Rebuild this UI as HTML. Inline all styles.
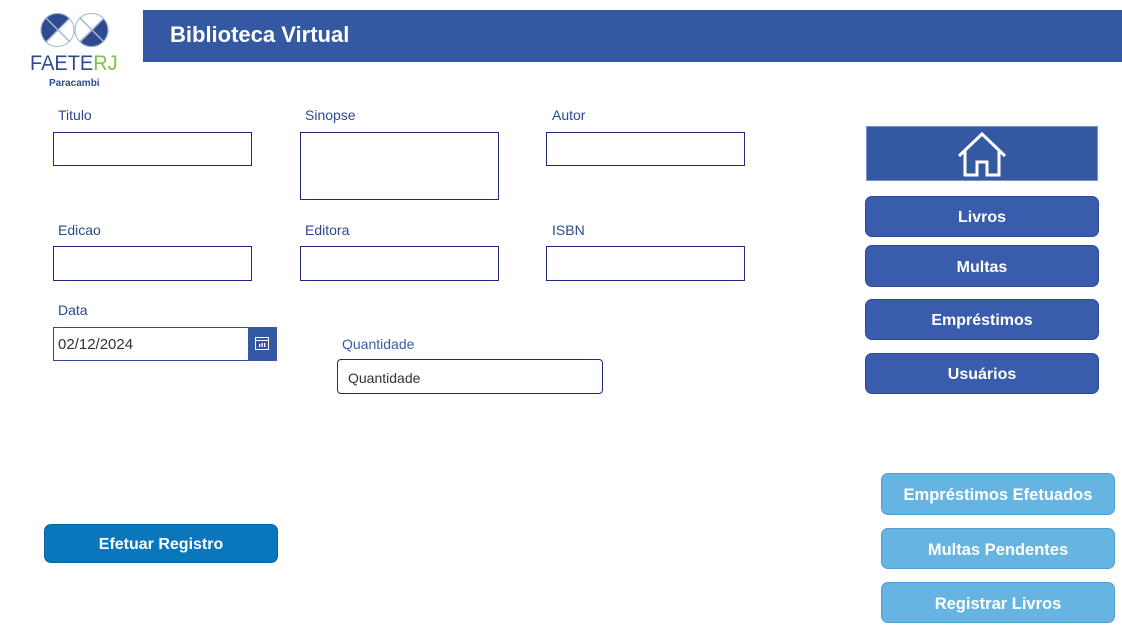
<!DOCTYPE html>
<html><head><meta charset="utf-8"><style>
*{margin:0;padding:0;box-sizing:border-box}
body{width:1122px;height:629px;background:#fff;position:relative;overflow:hidden;font-family:"Liberation Sans",sans-serif}
.a{position:absolute}
.lbl{position:absolute;font-size:14px;color:#2c4a8c}
.inp{position:absolute;border:1px solid #1e2a7e;background:#fff}
.btn{position:absolute;border-radius:7px;color:#fff;font-weight:bold;font-size:16px;display:flex;align-items:center;justify-content:center;padding-top:3px}
.dk{background:#3a5cad;border:1px solid #2e4a94}
.lt{background:#66b4e2;border:1px solid #4e9fd4;font-size:16.5px}
</style></head><body>
<svg class="a" style="left:40px;top:10px" width="70" height="40" viewBox="0 0 70 40">
<defs>
<clipPath id="c1"><circle cx="17.5" cy="20" r="17"/></clipPath>
<clipPath id="c2"><circle cx="51.5" cy="20" r="17"/></clipPath>
</defs>
<g clip-path="url(#c1)">
<rect x="0" y="0" width="35" height="40" fill="#2e4b8e"/>
<polygon points="17.5,20 40,0 40,40" fill="#fff"/>
<polygon points="17.5,20 40,40 0,40" fill="#fff"/>
<line x1="0" y1="2" x2="38" y2="40" stroke="#a8b6d6" stroke-width="1.5"/>
<line x1="0" y1="38" x2="38" y2="0" stroke="#a8b6d6" stroke-width="1.5"/>
</g>
<g clip-path="url(#c2)">
<rect x="34" y="0" width="36" height="40" fill="#2e4b8e"/>
<polygon points="51.5,20 30,0 30,40" fill="#fff"/>
<polygon points="51.5,20 30,0 72,0" fill="#fff"/>
<line x1="32" y1="0" x2="70" y2="38" stroke="#a8b6d6" stroke-width="1.5"/>
<line x1="32" y1="40" x2="70" y2="2" stroke="#a8b6d6" stroke-width="1.5"/>
</g>
<circle cx="17.5" cy="20" r="16.5" fill="none" stroke="#a8b6d6" stroke-width="1"/>
<circle cx="51.5" cy="20" r="16.5" fill="none" stroke="#a8b6d6" stroke-width="1"/>
</svg>
<div class="a" style="left:30px;top:52px;font-size:21px;color:#2e4b8e;transform:scaleX(0.95);transform-origin:left">FAETE<span style="color:#7dc242">RJ</span></div>
<div class="a" style="left:49px;top:78px;font-size:10px;color:#2e4b8e;font-weight:bold">Paracambi</div>
<div class="a" style="left:143px;top:10px;width:979px;height:52px;background:#3558a3"></div>
<div class="a" style="left:170px;top:22px;font-size:22px;color:#fff;font-weight:bold">Biblioteca Virtual</div>

<div class="lbl" style="left:58px;top:107px">Titulo</div>
<div class="inp" style="left:53px;top:132px;width:199px;height:34px"></div>
<div class="lbl" style="left:305px;top:107px">Sinopse</div>
<div class="inp" style="left:300px;top:132px;width:199px;height:68px"></div>
<div class="lbl" style="left:552px;top:107px">Autor</div>
<div class="inp" style="left:546px;top:132px;width:199px;height:34px"></div>
<div class="lbl" style="left:58px;top:222px">Edicao</div>
<div class="inp" style="left:53px;top:246px;width:199px;height:35px"></div>
<div class="lbl" style="left:305px;top:222px">Editora</div>
<div class="inp" style="left:300px;top:246px;width:199px;height:35px"></div>
<div class="lbl" style="left:552px;top:222px">ISBN</div>
<div class="inp" style="left:546px;top:246px;width:199px;height:35px"></div>
<div class="lbl" style="left:58px;top:302px">Data</div>
<div class="inp" style="left:53px;top:327px;width:224px;height:34px;border-color:#2e4a94"></div>
<div class="a" style="left:58px;top:336px;font-size:15px;color:#333">02/12/2024</div>
<div class="a" style="left:248px;top:327px;width:29px;height:34px;background:#3558a3"></div>
<svg class="a" style="left:255px;top:337px" width="14" height="13" viewBox="0 0 14 13"><rect x="0.5" y="0.5" width="13" height="12" fill="none" stroke="#fff"/><line x1="0" y1="3.5" x2="14" y2="3.5" stroke="#fff"/><rect x="4" y="7" width="1.3" height="3" fill="#fff"/><rect x="6.5" y="6" width="1.3" height="4" fill="#fff"/><rect x="9" y="6" width="1.3" height="4" fill="#fff"/></svg>
<div class="lbl" style="left:342px;top:336px;color:#3a5cad">Quantidade</div>
<div class="inp" style="left:337px;top:359px;width:266px;height:35px;border-radius:4px"></div>
<div class="a" style="left:348px;top:370px;font-size:14px;color:#333">Quantidade</div>

<div class="a" style="left:866px;top:126px;width:232px;height:55px;background:#3558a3;border:1px solid #7a94c8"></div>
<svg class="a" style="left:956px;top:130px" width="52" height="48" viewBox="0 0 52 48"><path d="M3 26 L26 4 L49 26 M9 21 V45 H21 V32 H31 V45 H43 V21" fill="none" stroke="#fff" stroke-width="3"/></svg>
<div class="btn dk" style="left:865px;top:196px;width:234px;height:41px">Livros</div>
<div class="btn dk" style="left:865px;top:245px;width:234px;height:42px">Multas</div>
<div class="btn dk" style="left:865px;top:299px;width:234px;height:41px">Empréstimos</div>
<div class="btn dk" style="left:865px;top:353px;width:234px;height:41px">Usuários</div>

<div class="btn lt" style="left:881px;top:473px;width:234px;height:42px">Empréstimos Efetuados</div>
<div class="btn lt" style="left:881px;top:528px;width:234px;height:41px">Multas Pendentes</div>
<div class="btn lt" style="left:881px;top:582px;width:234px;height:41px">Registrar Livros</div>

<div class="btn" style="left:44px;top:524px;width:234px;height:39px;background:#0a77bc;border:1px solid #07649f">Efetuar Registro</div>
</body></html>
